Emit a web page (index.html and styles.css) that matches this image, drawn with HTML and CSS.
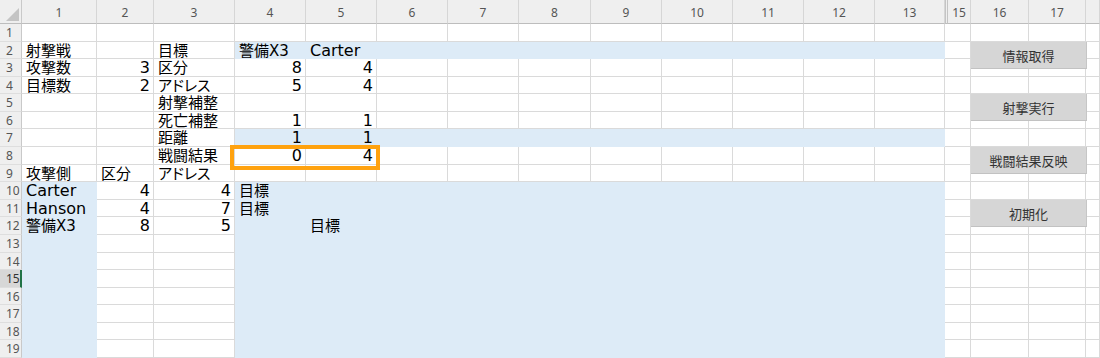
FILE: index.html
```html
<!DOCTYPE html>
<html lang="ja">
<head>
    <meta charset="UTF-8">
    <title>射撃戦</title>
    <link rel="stylesheet" href="styles.css">
</head>
<body>
    <div id="sheet">
        <div id="grid"></div>

        <!-- macro buttons placed over columns 16-17 -->
        <button class="macro btn-fetch">情報取得</button>
        <button class="macro btn-fire">射撃実行</button>
        <button class="macro btn-apply">戦闘結果反映</button>
        <button class="macro btn-reset">初期化</button>

        <!-- highlight shape round the battle result -->
        <div class="result-frame"></div>
    </div>
<script>
    const grid = document.getElementById("grid");

    const headers = ["1", "2", "3", "4", "5", "6", "7", "8", "9", "10", "11", "12", "13", "", "15", "16", "17", ""];

    const cells = {
        "2,1": "射撃戦", "2,3": "目標", "2,4": "警備X3", "2,5": "Carter",
        "3,1": "攻撃数", "3,2": 3, "3,3": "区分", "3,4": 8, "3,5": 4,
        "4,1": "目標数", "4,2": 2, "4,3": "アドレス", "4,4": 5, "4,5": 4,
        "5,3": "射撃補整",
        "6,3": "死亡補整", "6,4": 1, "6,5": 1,
        "7,3": "距離", "7,4": 1, "7,5": 1,
        "8,3": "戦闘結果", "8,4": 0, "8,5": 4,
        "9,1": "攻撃側", "9,2": "区分", "9,3": "アドレス",
        "10,1": "Carter", "10,2": 4, "10,3": 4, "10,4": "目標",
        "11,1": "Hanson", "11,2": 4, "11,3": 7, "11,4": "目標",
        "12,1": "警備X3", "12,2": 8, "12,3": 5, "12,5": "目標"
    };

    function isBlue(r, c) {
        if (c >= 4 && c <= 13 && (r === 2 || r === 7 || r >= 10)) return true;
        return c === 1 && r >= 10;
    }

    function addCell(cls, text) {
        const div = document.createElement("div");
        div.className = cls;
        if (text !== undefined) div.textContent = text;
        grid.appendChild(div);
    }

    addCell("corner");
    headers.forEach((h, i) => addCell(i === 13 ? "colhdr hid" : "colhdr", h));

    for (let r = 1; r <= 19; r++) {
        addCell(r === 15 ? "rowhdr active" : "rowhdr", r);
        for (let c = 1; c <= 18; c++) {
            const v = cells[r + "," + c];
            let cls = "cell";
            if (c === 14) cls += " hid";
            if (isBlue(r, c)) cls += " blue";
            if (typeof v === "number") cls += " num";
            if (v !== undefined && /^[A-Za-z0-9]+$/.test(String(v))) cls += " lat";
            addCell(cls, v);
        }
    }
</script>
</body>
</html>
```

FILE: styles.css
```css
* {
    box-sizing: border-box;
}

body {
    margin: 0;
    background: #fff;
    font-family: "DejaVu Sans", "Noto Sans CJK JP", sans-serif;
    color: #000;
}

#sheet {
    position: relative;
    width: 1100px;
    height: 358px;
    overflow: hidden;
}

#grid {
    display: grid;
    grid-template-columns: 22px 75px 57px 81px 71px 71px 71px 71px 72px 71px 71px 71px 71px 70px 3px 23px 58px 57px 1fr;
    grid-template-rows: 24px;
    grid-auto-rows: 17.58px;
}

.corner {
    position: relative;
    background: #efefef;
    border-right: 1px solid #c9c9c9;
    border-bottom: 1px solid #bdbdbd;
}

.corner::after {
    content: "";
    position: absolute;
    right: 2px;
    bottom: 2px;
    border-left: 13px solid transparent;
    border-bottom: 13px solid #c4c4c4;
}

.colhdr {
    background: #efefef;
    border-right: 1px solid #d6d6d6;
    border-bottom: 1px solid #bdbdbd;
    color: #555;
    font: 12px "Noto Sans", sans-serif;
    text-align: center;
    line-height: 26px;
}

.colhdr.hid {
    border-left: 1px solid #c4c4c4;
    border-right: 1px solid #c4c4c4;
}

.rowhdr {
    background: #efefef;
    border-right: 1px solid #c9c9c9;
    border-bottom: 1px solid #dedede;
    color: #555;
    font: 12px "Noto Sans", sans-serif;
    line-height: 17px;
    padding-left: 6px;
}

.rowhdr.active {
    background: #d7d7d7;
    border-right: 2px solid #217346;
    color: #333;
}

.cell {
    border-right: 1px solid #dadada;
    border-bottom: 1px solid #dadada;
    font-size: 15px;
    line-height: 18px;
    padding: 0 3px 0 4px;
    white-space: nowrap;
    font-feature-settings: "palt";
}

.cell.hid {
    border-right: 0;
}

.cell.blue {
    background: #ddebf7;
    border-color: transparent;
}

.cell.num {
    text-align: right;
}

.cell.lat {
    font-size: 16px;
}

.macro {
    position: absolute;
    left: 971px;
    width: 116px;
    height: 27px;
    padding: 0;
    background: #d6d6d6;
    border: 0;
    border-right: 1px solid #c6c6c6;
    border-bottom: 1px solid #c2c2c2;
    color: #333;
    font: 13px "Noto Sans CJK JP", sans-serif;
}

.btn-fetch { top: 42px; }
.btn-fire { top: 94px; }
.btn-apply { top: 147px; }
.btn-reset { top: 200px; }

.result-frame {
    position: absolute;
    left: 230px;
    top: 145px;
    width: 150px;
    height: 25px;
    border: 4px solid #ffa20f;
}
```
